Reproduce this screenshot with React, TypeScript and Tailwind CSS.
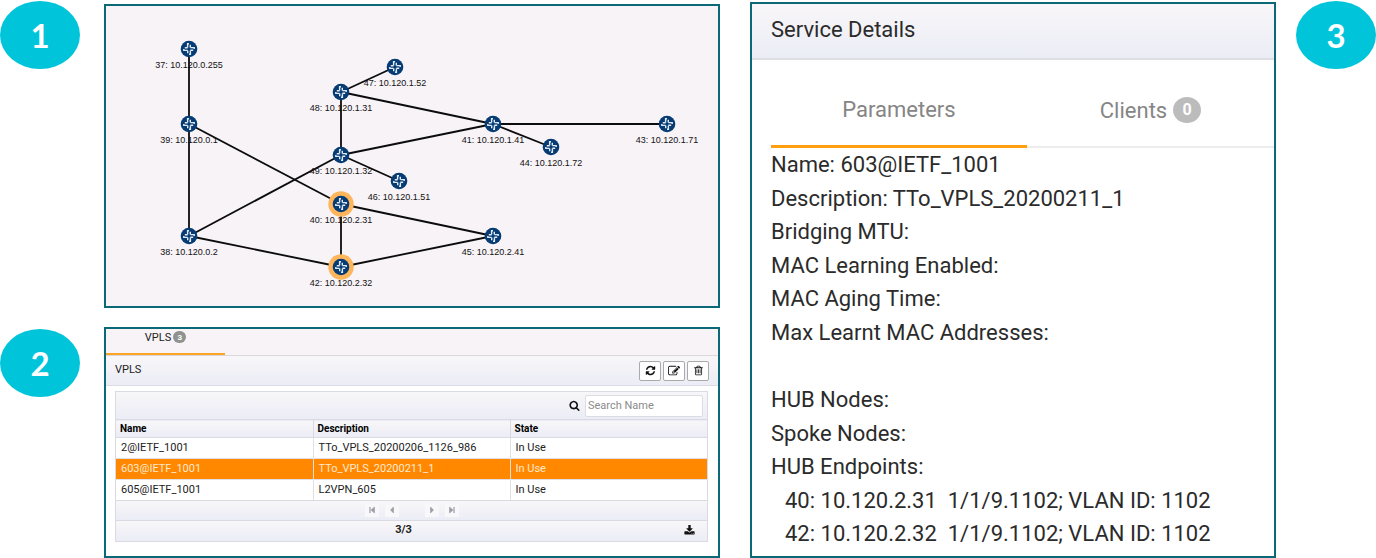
import React from "react";

type Device = { id: number; ip: string; x: number; y: number; selected?: boolean };

const devices: Device[] = [
  { id: 37, ip: "10.120.0.255", x: 83, y: 43 },
  { id: 39, ip: "10.120.0.1", x: 83, y: 118 },
  { id: 38, ip: "10.120.0.2", x: 83, y: 230 },
  { id: 48, ip: "10.120.1.31", x: 235, y: 86 },
  { id: 47, ip: "10.120.1.52", x: 289, y: 61 },
  { id: 41, ip: "10.120.1.41", x: 387, y: 118 },
  { id: 43, ip: "10.120.1.71", x: 561, y: 118 },
  { id: 44, ip: "10.120.1.72", x: 445, y: 141 },
  { id: 49, ip: "10.120.1.32", x: 235, y: 149 },
  { id: 46, ip: "10.120.1.51", x: 293, y: 175 },
  { id: 40, ip: "10.120.2.31", x: 235, y: 198, selected: true },
  { id: 42, ip: "10.120.2.32", x: 235, y: 261, selected: true },
  { id: 45, ip: "10.120.2.41", x: 387, y: 230 },
];

const links: [number, number][] = [
  [37, 39], [39, 38], [39, 40], [38, 49], [38, 42], [48, 47], [48, 41],
  [48, 49], [49, 41], [49, 46], [41, 43], [41, 44], [40, 42], [40, 45], [42, 45],
];

const services = [
  { name: "2@IETF_1001", description: "TTo_VPLS_20200206_1126_986", state: "In Use" },
  { name: "603@IETF_1001", description: "TTo_VPLS_20200211_1", state: "In Use", selected: true },
  { name: "605@IETF_1001", description: "L2VPN_605", state: "In Use" },
];

const details = [
  "Name: 603@IETF_1001",
  "Description: TTo_VPLS_20200211_1",
  "Bridging MTU:",
  "MAC Learning Enabled:",
  "MAC Aging Time:",
  "Max Learnt MAC Addresses:",
  "",
  "HUB Nodes:",
  "Spoke Nodes:",
  "HUB Endpoints:",
];

const endpoints = [
  "40: 10.120.2.31  1/1/9.1102; VLAN ID: 1102",
  "42: 10.120.2.32  1/1/9.1102; VLAN ID: 1102",
];

const icons = {
  refresh:
    "M1639 1056q0 5-1 7-64 268-268 434.5t-478 166.5q-146 0-282.5-55t-243.5-157l-129 129q-19 19-45 19t-45-19-19-45v-448q0-26 19-45t45-19h448q26 0 45 19t19 45-19 45l-137 137q71 66 161 102t187 36q134 0 250-65t186-179q11-17 53-117 8-23 30-23h192q13 0 22.5 9.5t9.5 22.5zm25-800v448q0 26-19 45t-45 19h-448q-26 0-45-19t-19-45 19-45l138-138q-148-137-349-137-134 0-250 65t-186 179q-11 17-53 117-8 23-30 23h-199q-13 0-22.5-9.5t-9.5-22.5v-7q65-268 270-434.5t480-166.5q146 0 284 55.5t245 156.5l130-129q19-19 45-19t45 19 19 45z",
  edit:
    "M888 1184l116-116-152-152-116 116v56h96v96h56zm440-720q-16-16-33 1l-350 350q-17 17-1 33t33-1l350-350q17-17 1-33zm80 594v190q0 119-84.5 203.5t-203.5 84.5h-832q-119 0-203.5-84.5t-84.5-203.5v-832q0-119 84.5-203.5t203.5-84.5h832q63 0 117 25 15 7 18 23 3 17-9 29l-49 49q-14 14-32 8-23-6-45-6h-832q-66 0-113 47t-47 113v832q0 66 47 113t113 47h832q66 0 113-47t47-113v-126q0-13 9-22l64-64q15-15 35-7t20 29zm-96-738l288 288-672 672h-288v-288zm444 132l-92 92-288-288 92-92q28-28 68-28t68 28l152 152q28 28 28 68t-28 68z",
  trash:
    "M704 736v576q0 14-9 23t-23 9h-64q-14 0-23-9t-9-23v-576q0-14 9-23t23-9h64q14 0 23 9t9 23zm256 0v576q0 14-9 23t-23 9h-64q-14 0-23-9t-9-23v-576q0-14 9-23t23-9h64q14 0 23 9t9 23zm256 0v576q0 14-9 23t-23 9h-64q-14 0-23-9t-9-23v-576q0-14 9-23t23-9h64q14 0 23 9t9 23zm128 724v-948h-896v948q0 22 7 40.5t14.5 27 10.5 8.5h832q3 0 10.5-8.5t14.5-27 7-40.5zm-672-1076h448l-48-117q-7-9-17-11h-317q-10 2-17 11zm928 32v64q0 14-9 23t-23 9h-96v948q0 83-47 143.5t-113 60.5h-832q-66 0-113-58.5t-47-141.5v-952h-96q-14 0-23-9t-9-23v-64q0-14 9-23t23-9h309l70-167q15-37 54-63t79-26h320q40 0 79 26t54 63l70 167h309q14 0 23 9t9 23z",
  search:
    "M1216 832q0-185-131.5-316.5t-316.5-131.5-316.5 131.5-131.5 316.5 131.5 316.5 316.5 131.5 316.5-131.5 131.5-316.5zm512 832q0 52-38 90t-90 38q-54 0-90-38l-343-342q-179 124-399 124-143 0-273.5-55.5t-225-150-150-225-55.5-273.5 55.5-273.5 150-225 225-150 273.5-55.5 273.5 55.5 225 150 150 225 55.5 273.5q0 220-124 399l343 343q37 37 37 90z",
  download:
    "M1344 1344q0-26-19-45t-45-19-45 19-19 45 19 45 45 19 45-19 19-45zm256 0q0-26-19-45t-45-19-45 19-19 45 19 45 45 19 45-19 19-45zm128-224v320q0 40-28 68t-68 28h-1472q-40 0-68-28t-28-68v-320q0-40 28-68t68-28h465l135 136q58 56 136 56t136-56l136-136h464q40 0 68 28t28 68zm-325-569q17 41-14 70l-448 448q-18 19-45 19t-45-19l-448-448q-31-29-14-70 17-39 59-39h256v-448q0-26 19-45t45-19h256q26 0 45 19t19 45v448h256q42 0 59 39z",
};

function Icon({ name, className }: { name: keyof typeof icons; className: string }) {
  return (
    <svg viewBox="0 0 1792 1792" className={className} fill="currentColor" aria-hidden="true">
      <path d={icons[name]} />
    </svg>
  );
}

function Step({ n }: { n: number }) {
  return (
    <div className="flex h-[68px] w-20 items-center justify-center rounded-[50%] bg-[#00c5da] pt-[2px] font-['Lato'] text-[33px] font-bold text-white">
      {n}
    </div>
  );
}

function Topology() {
  const at = (id: number) => devices.find((d) => d.id === id)!;
  return (
    <section aria-label="Topology" className="border-2 border-[#0b6876] bg-[#f7f3f7]">
      <svg viewBox="0 0 612 300" className="block h-auto w-full">
        <g stroke="#0c0c0c" strokeWidth="1.8">
          {links.map(([a, b]) => (
            <line key={`${a}-${b}`} x1={at(a).x} y1={at(a).y} x2={at(b).x} y2={at(b).y} />
          ))}
        </g>
        {devices.map((d) => (
          <g key={d.id} transform={`translate(${d.x} ${d.y})`}>
            {d.selected && <circle r="12.7" fill="#ffb55c" />}
            <circle r="8.3" fill="#063b73" />
            <g stroke="#dfeaf5" strokeWidth="1.4" fill="none">
              {[0, 90, 180, 270].map((r) => (
                <path key={r} transform={`rotate(${r})`} d="M-1.4 -1.4V-5.2H0M1.3 -1.4V-4.2" />
              ))}
            </g>
            <text y="19" textAnchor="middle" className="fill-[#111] font-['Liberation_Sans'] text-[9px]">
              {`${d.id}: ${d.ip}`}
            </text>
          </g>
        ))}
      </svg>
    </section>
  );
}

const bar = "bg-linear-to-b from-[#f8f6f8] to-[#ebedf6]";
const toolButton =
  "flex h-5 w-[22px] items-center justify-center rounded-[2px] border border-[#aaa] bg-white text-[#111]";
const pageButton = "flex h-[14px] w-[14px] items-center justify-center bg-[#f8f8fb] text-[#9a9ca6]";

function Pager() {
  const pages = [
    { label: "First page", d: "M1.5 1V7M2.5 1V7M6.5 1L3 4L6.5 7Z" },
    { label: "Previous page", d: "M5.5 1L2.5 4L5.5 7Z" },
    { label: "Next page", d: "M2.5 1L5.5 4L2.5 7Z" },
    { label: "Last page", d: "M6.5 1V7M5.5 1V7M1.5 1L5 4L1.5 7Z" },
  ];
  return (
    <div className={`flex h-5 items-center justify-center gap-[6px] border-t border-[#d9dae2] ${bar}`}>
      {pages.map((p, i) => (
        <React.Fragment key={p.label}>
          {i === 2 && <span className="w-[14px]" />}
          <button type="button" aria-label={p.label} className={pageButton}>
            <svg viewBox="0 0 8 8" className="size-2" fill="currentColor" stroke="currentColor" strokeWidth="0.6">
              <path d={p.d} />
            </svg>
          </button>
        </React.Fragment>
      ))}
    </div>
  );
}

function ServiceList() {
  return (
    <section
      aria-label="VPLS services"
      className="flex flex-col border-2 border-[#0b6876] bg-white font-['Roboto'] text-[11px] text-[#222]"
    >
      <div className="flex h-[27px] border-b border-[#d9d9de] bg-[#f7f3f7]">
        <button
          type="button"
          className="flex h-[26px] w-[119px] items-start justify-center gap-[2px] border-b-2 border-[#ffa326] pt-[2px] leading-[13px]"
        >
          VPLS
          <span className="flex h-3 w-[13px] items-center justify-center rounded-full bg-[#8f928f] text-[8px] font-bold text-white">
            3
          </span>
        </button>
      </div>
      <header className={`flex h-[30px] items-center justify-between border-b border-[#dcdde4] px-[9px] ${bar}`}>
        <h2>VPLS</h2>
        <div className="flex gap-[2px]">
          <button type="button" aria-label="Refresh" className={toolButton}>
            <Icon name="refresh" className="size-[11px]" />
          </button>
          <button type="button" aria-label="Edit" className={toolButton}>
            <Icon name="edit" className="size-[12px]" />
          </button>
          <button type="button" aria-label="Delete" className={toolButton}>
            <Icon name="trash" className="size-[11px]" />
          </button>
        </div>
      </header>
      <div className="mr-[10px] mb-[14px] ml-[9px] mt-[5px] border border-[#d9dae2]">
        <div className={`flex h-[27px] items-center justify-end gap-[5px] pr-1 ${bar}`}>
          <label htmlFor="search-name" aria-label="Search Name">
            <Icon name="search" className="size-[11px] text-[#111]" />
          </label>
          <input
            id="search-name"
            type="text"
            placeholder="Search Name"
            className="h-[22px] w-[118px] rounded-[2px] border border-[#dcdde4] bg-white px-[2px] placeholder:text-[#8b8b8b]"
          />
        </div>
        <table className="w-full table-fixed border-collapse text-left leading-4">
          <thead>
            <tr className={`h-[18px] border-y border-[#d9dae2] text-[10px] ${bar}`}>
              {["Name", "Description", "State"].map((h) => (
                <th key={h} scope="col" className="border-r border-[#d9dae2] px-1 font-bold text-black last:border-r-0">
                  {h}
                </th>
              ))}
            </tr>
          </thead>
          <tbody>
            {services.map((s) => (
              <tr
                key={s.name}
                className={
                  s.selected
                    ? "h-[21px] border-b border-[#e0e0e4] bg-[#ff8800] text-[#ffe9cf]"
                    : "h-[21px] border-b border-[#e0e0e4] last:h-5 last:border-b-0"
                }
              >
                {[s.name, s.description, s.state].map((v, i) => (
                  <td key={i} className="border-r border-[#e0e0e4] px-[5px] whitespace-nowrap last:border-r-0">
                    {v}
                  </td>
                ))}
              </tr>
            ))}
          </tbody>
        </table>
        <Pager />
        <div className={`grid h-[21px] grid-cols-[1fr_auto_1fr] items-center border-t border-[#d9dae2] px-3 ${bar}`}>
          <span className="col-start-2 pr-4 font-bold">3/3</span>
          <button type="button" aria-label="Download" className="justify-self-end text-[#111]">
            <Icon name="download" className="size-[11px]" />
          </button>
        </div>
      </div>
    </section>
  );
}

function ServiceDetails() {
  return (
    <section
      aria-label="Service Details"
      className="mt-px flex flex-col border-2 border-[#0b6876] bg-white font-['Roboto'] text-[22px] text-[#2b2b2b]"
    >
      <header className="flex h-14 items-center border-b-2 border-[#dedee3] bg-linear-to-b from-[#f8f6f8] to-[#ebedf6] pb-1 pl-[19px]">
        <h2>Service Details</h2>
      </header>
      <div className="ml-[19px] flex h-[88px] text-[#858585]">
        <button type="button" className="flex w-[256px] items-center justify-center border-b-3 border-[#ff9f0f] pt-[14px]">
          Parameters
        </button>
        <button
          type="button"
          className="flex flex-1 items-center justify-center gap-[6px] border-b-2 border-[#ececec] pt-[14px]"
        >
          Clients
          <span className="flex h-[26px] w-7 items-center justify-center rounded-[50%] bg-[#bcbcbc] text-[16px] font-bold text-white">
            0
          </span>
        </button>
      </div>
      <ul className="mb-[5px] ml-[19px] grid flex-1 auto-rows-fr items-center leading-[33px] whitespace-pre">
        {details.map((line, i) => (
          <li key={i}>{line}</li>
        ))}
        {endpoints.map((line) => (
          <li key={line} className="pl-[14px]">
            {line}
          </li>
        ))}
      </ul>
    </section>
  );
}

export default function App() {
  return (
    <main className="grid grid-cols-[80px_640fr_556fr_100px] bg-white pt-px">
      <div className="grid grid-rows-[328px_auto] content-start">
        <Step n={1} />
        <Step n={2} />
      </div>
      <div className="ml-6 flex flex-col gap-[19px] pt-[3px]">
        <Topology />
        <ServiceList />
      </div>
      <div className="ml-[30px] grid">
        <ServiceDetails />
      </div>
      <div className="ml-5">
        <Step n={3} />
      </div>
    </main>
  );
}
